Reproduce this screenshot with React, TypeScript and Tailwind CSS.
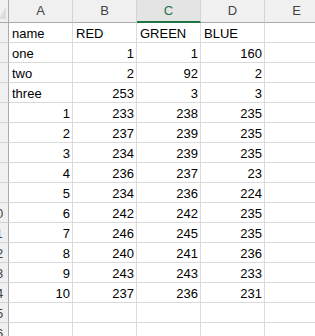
import React from 'react';

const cols = ['A', 'B', 'C', 'D', 'E'];

const rows: (string | number)[][] = [
     ['name', 'RED', 'GREEN', 'BLUE'],
     ['one', 1, 1, 160],
     ['two', 2, 92, 2],
     ['three', 253, 3, 3],
     [1, 233, 238, 235],
     [2, 237, 239, 235],
     [3, 234, 239, 235],
     [4, 236, 237, 23],
     [5, 234, 236, 224],
     [6, 242, 242, 235],
     [7, 246, 245, 235],
     [8, 240, 241, 236],
     [9, 243, 243, 233],
     [10, 237, 236, 231],
     [],
     [],
];

const Cell = ({ value }: { value?: string | number }) => {
     const isNum = typeof value === 'number';
     return (
          <div
               className={`h-[20px] w-[64px] shrink-0 overflow-hidden whitespace-nowrap border-b border-r border-[#dadada] pt-[3px] text-[13px] leading-[16px] text-black ${
                    isNum ? 'pr-[2px] text-right' : 'pl-[3px] text-left'
               }`}
          >
               {value ?? ''}
          </div>
     );
};

export default function App() {
     return (
          <div
               className="h-[336px] w-[315px] overflow-hidden bg-white"
               style={{ fontFamily: '"Liberation Sans", Arial, sans-serif' }}
          >
               {/* column headers */}
               <div className="flex h-[23px]">
                    <div className="relative h-[23px] w-[9px] shrink-0 border-b border-r border-[#ababab] bg-[#f0f0f0]">
                         <div className="absolute bottom-[3px] right-[2px] h-0 w-0 border-b-[12px] border-l-[7px] border-b-[#dcdcdc] border-l-transparent" />
                    </div>
                    {cols.map((c) => (
                         <div
                              key={c}
                              className={`h-[23px] w-[64px] shrink-0 border-r pt-[3px] text-center text-[13px] leading-[16px] ${
                                   c === 'C'
                                        ? 'border-b-2 border-r-[#d4d4d4] border-b-[#217346] bg-[#e4e4e4] text-[#217346]'
                                        : 'border-b border-r-[#d4d4d4] border-b-[#ababab] bg-[#f0f0f0] text-[#444]'
                              }`}
                         >
                              {c}
                         </div>
                    ))}
               </div>
               {rows.map((r, i) => (
                    <div key={i} className="flex h-[20px]">
                         <div className="h-[20px] w-[9px] shrink-0 overflow-hidden border-b border-r border-b-[#d4d4d4] border-r-[#ababab] bg-[#f0f0f0]">
                              <div className="ml-[-15px] w-[22px] pt-[3px] text-center text-[13px] leading-[16px] text-[#444]">
                                   {i + 1}
                              </div>
                         </div>
                         {cols.map((c, j) => (
                              <Cell key={c} value={r[j]} />
                         ))}
                    </div>
               ))}
          </div>
     );
}
